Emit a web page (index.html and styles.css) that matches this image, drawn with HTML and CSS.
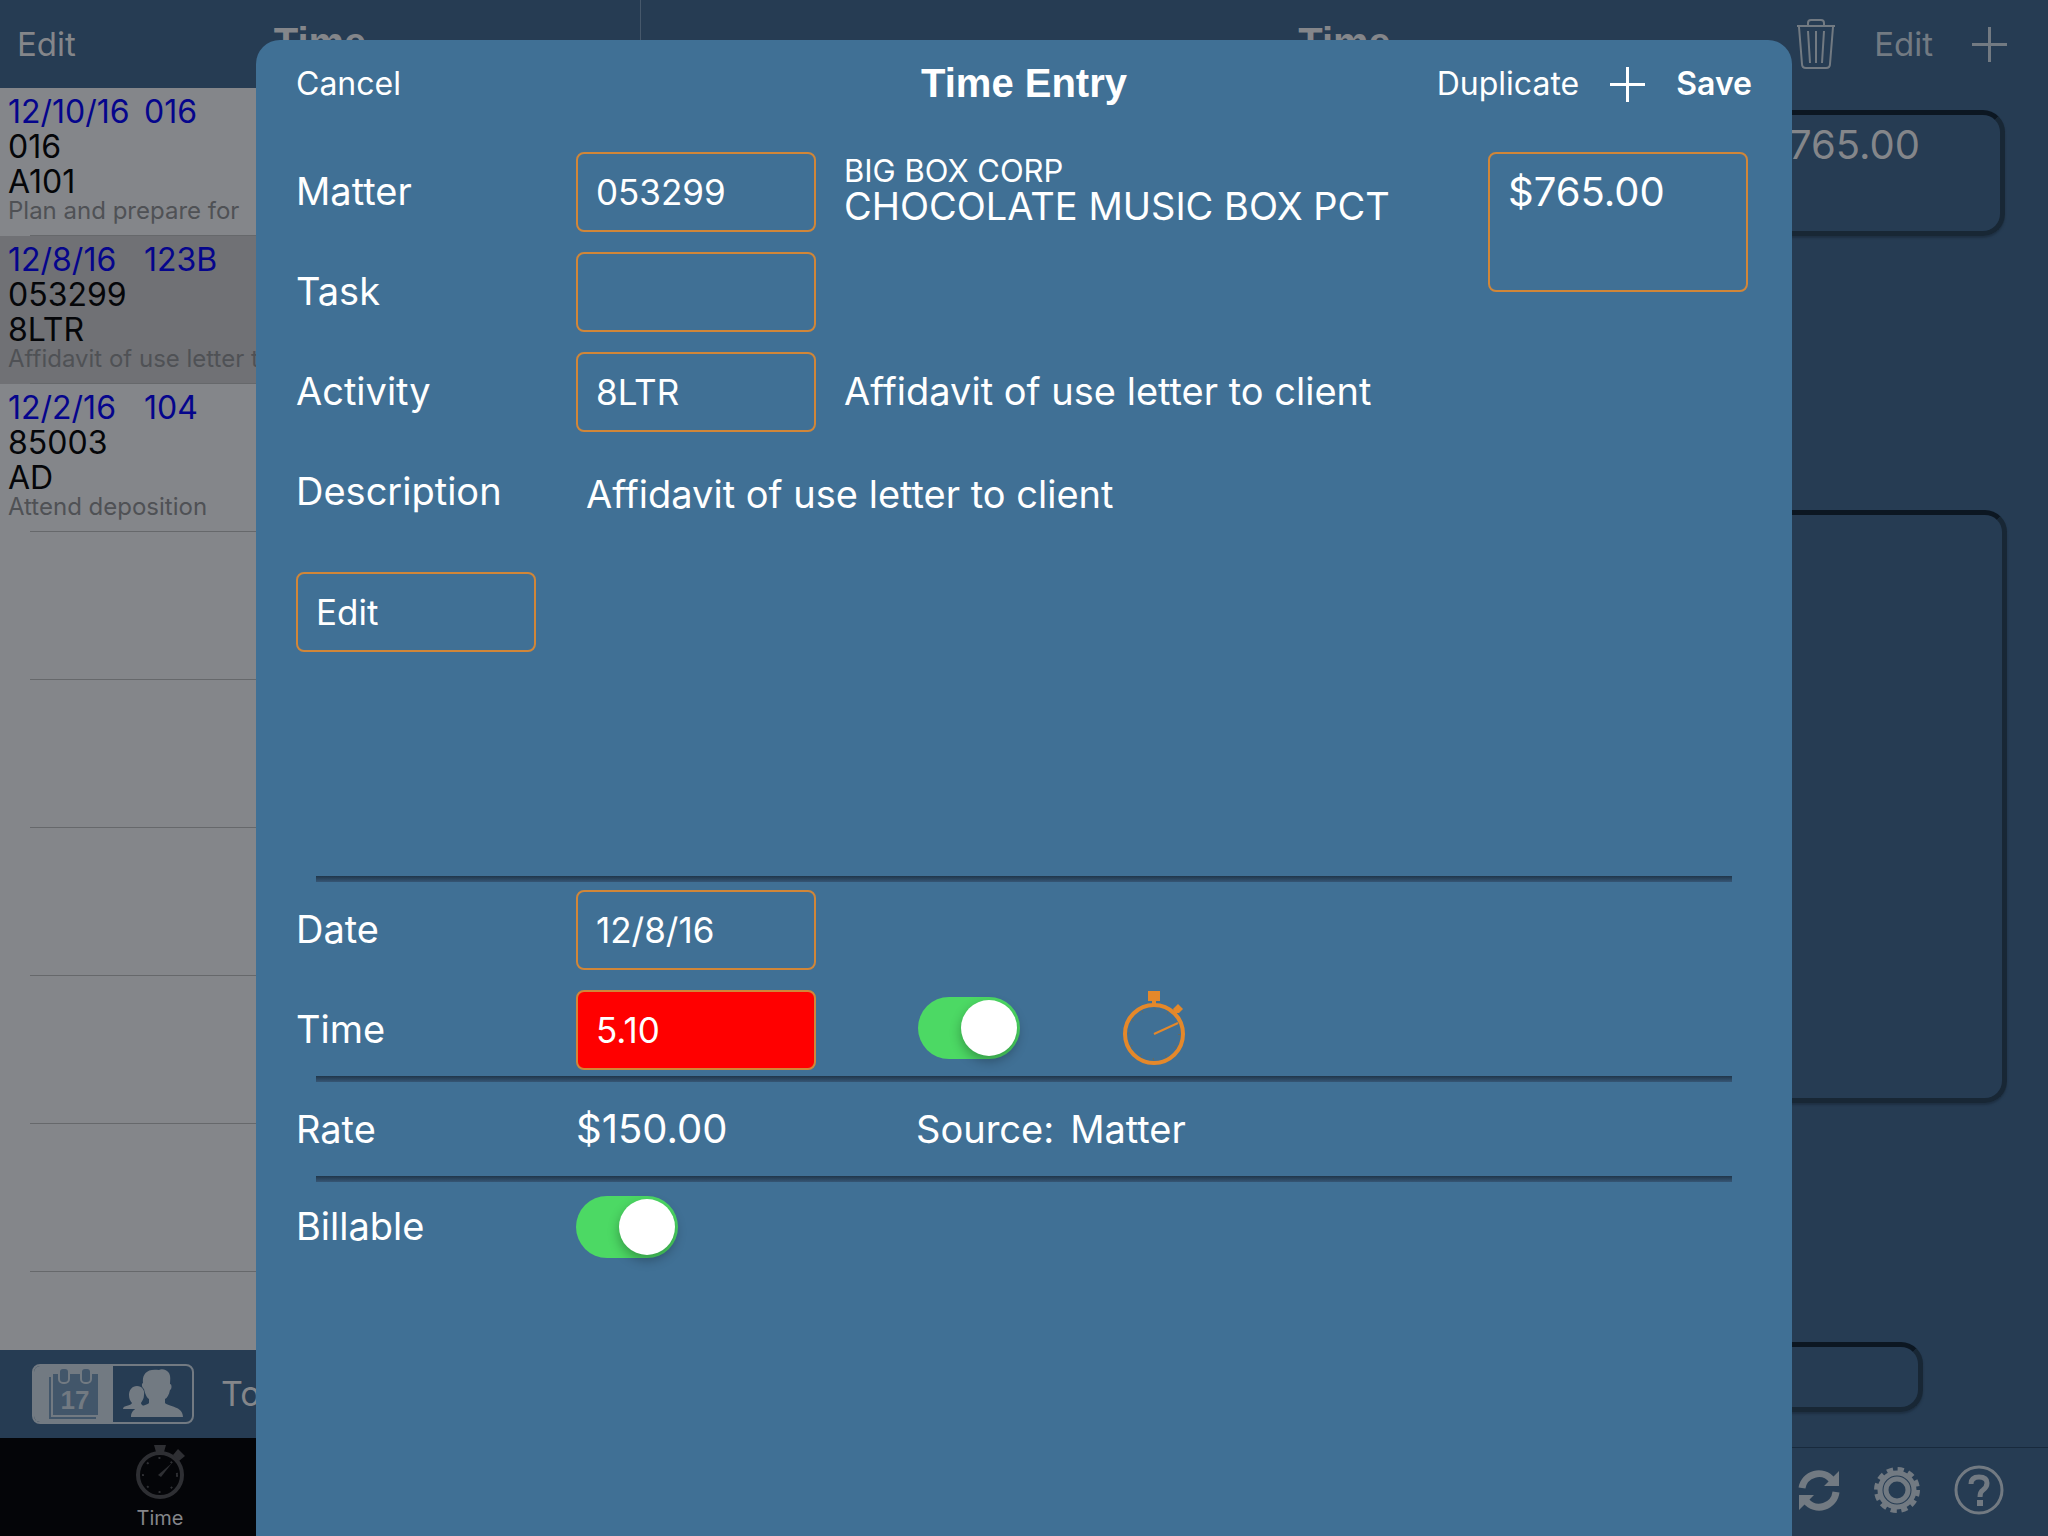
FILE: index.html
```html
<!DOCTYPE html>
<html lang="en">
<head>
    <meta charset="UTF-8">
    <meta name="viewport" content="width=device-width, initial-scale=1.0">
    <title>Time Entry</title>
    <link rel="stylesheet" href="styles.css">
</head>
<body>
    <div class="app">
        <aside class="sidebar">
            <header class="bar">
                <button class="bar-button">Edit</button>
                <h2>Time</h2>
            </header>

            <ul class="entries">
                <li class="entry">
                    <div class="entry-top"><span>12/10/16</span><span>016</span></div>
                    <div class="entry-line">016</div>
                    <div class="entry-line">A101</div>
                    <div class="entry-note">Plan and prepare for</div>
                </li>
                <li class="entry selected">
                    <div class="entry-top"><span>12/8/16</span><span>123B</span></div>
                    <div class="entry-line">053299</div>
                    <div class="entry-line">8LTR</div>
                    <div class="entry-note">Affidavit of use letter to client</div>
                </li>
                <li class="entry">
                    <div class="entry-top"><span>12/2/16</span><span>104</span></div>
                    <div class="entry-line">85003</div>
                    <div class="entry-line">AD</div>
                    <div class="entry-note">Attend deposition</div>
                </li>
                <li class="entry"></li>
                <li class="entry"></li>
                <li class="entry"></li>
                <li class="entry"></li>
                <li class="entry"></li>
            </ul>

            <div class="filter-bar">
                <div class="segmented">
                    <button class="segment active" aria-label="By date">
                        <svg width="50" height="52" viewBox="0 0 50 52">
                            <path d="M1 9V50H47" fill="none" stroke="#42566a" stroke-width="2"/>
                            <path d="M4 6H49V47H4Z" fill="#42566a"/>
                            <rect x="10" y="0" width="10" height="15" rx="4" fill="#42566a" stroke="#727a82" stroke-width="2"/>
                            <rect x="32" y="0" width="10" height="15" rx="4" fill="#42566a" stroke="#727a82" stroke-width="2"/>
                            <text x="26" y="41" text-anchor="middle" class="calendar-day">17</text>
                        </svg>
                    </button>
                    <button class="segment" aria-label="By person">
                        <svg width="60" height="50" viewBox="0 0 60 50" fill="#727a82">
                            <path d="M14 17c5 0 8 4 7 9 0 4-2 6-3 8 0 3 6 3 3 6H0c0-4 8-3 9-6-2-2-3-5-3-8 0-5 3-9 8-9z"/>
                            <path d="M36 1c3-2 8 0 10 3 2 4 1 7 1 11 2 0 2 5 0 6-1 5-3 8-5 9v4c4 4 18 3 18 14H8c0-11 14-10 18-14v-4c-2-1-4-5-5-10-2-1-3-5-1-6-1-8 3-15 16-13z"/>
                        </svg>
                    </button>
                </div>
                <span class="filter-label">To</span>
            </div>

            <nav class="tabs">
                <a class="tab" href="#time">
                    <svg width="50" height="56" viewBox="0 0 50 56">
                        <circle cx="25" cy="31" r="22" fill="none" stroke="#2e2f33" stroke-width="4"/>
                        <path d="M19 1H31L29 8H21Z" fill="#2e2f33"/>
                        <path d="M43 5L50 12L44 17L38 11Z" fill="#2e2f33"/>
                        <path d="M23 31L37 19L26 33Z" fill="#2e2f33"/>
                        <circle cx="25" cy="31" r="17" fill="none" stroke="#2e2f33" stroke-width="2" stroke-dasharray="2 11"/>
                    </svg>
                    Time
                </a>
            </nav>
        </aside>

        <main class="detail">
            <header class="bar">
                <h2>Time</h2>
                <div class="bar-actions">
                    <button class="bar-button" aria-label="Delete">
                        <svg width="38" height="50" viewBox="0 0 38 50" fill="none" stroke="#727a82" stroke-width="2">
                            <path d="M0 7H38M11 7V4Q11 1 14 1H24Q27 1 27 4V7M2 8L5 45Q5 49 9 49H29Q33 49 33 45L36 8"/>
                            <path d="M11 12L13 44M19 12V44M27 12L25 44"/>
                        </svg>
                    </button>
                    <button class="bar-button">Edit</button>
                    <button class="bar-button" aria-label="Add">
                        <svg width="35" height="35" viewBox="0 0 35 35" stroke="#727a82" stroke-width="3"><path d="M0 17.5H35M17.5 0V35"/></svg>
                    </button>
                </div>
            </header>
            <div class="panels">
                <section class="panel panel-total">$765.00</section>
                <section class="panel panel-main"></section>
                <section class="panel panel-small"></section>
            </div>
            <footer class="toolbar">
                <button class="bar-button" aria-label="Sync">
                    <svg width="42" height="44" viewBox="0 0 42 44">
                        <path d="M4 20A17 17 0 0 1 34 12M38 24A17 17 0 0 1 8 33" fill="none" stroke="#727a82" stroke-width="7"/>
                        <path d="M41 3V18H26ZM1 42V27H16Z" fill="#727a82"/>
                    </svg>
                </button>
                <button class="bar-button" aria-label="Settings">
                    <svg width="48" height="48" viewBox="0 0 48 48" fill="none" stroke="#727a82">
                        <circle cx="24" cy="24" r="20" stroke-width="6" stroke-dasharray="6 4.472"/>
                        <circle cx="24" cy="24" r="17" stroke-width="5"/>
                        <circle cx="24" cy="24" r="11" stroke-width="5"/>
                    </svg>
                </button>
                <button class="bar-button" aria-label="Help">
                    <svg width="50" height="50" viewBox="0 0 50 50" fill="none" stroke="#727a82">
                        <circle cx="25" cy="25" r="23" stroke-width="3"/>
                        <path d="M17 19Q17 12 25 12Q33 12 33 18Q33 22 29 25Q26 27 26 32" stroke-width="5"/>
                        <path d="M23 38H29" stroke-width="6"/>
                    </svg>
                </button>
            </footer>
        </main>
    </div>

    <div class="modal" role="dialog" aria-labelledby="modal-title">
        <header class="modal-header">
            <button class="modal-button">Cancel</button>
            <h1 id="modal-title">Time Entry</h1>
            <div class="modal-actions">
                <button class="modal-button">Duplicate</button>
                <button class="modal-button" aria-label="Add">
                    <svg width="35" height="35" viewBox="0 0 35 35" stroke="#fff" stroke-width="3"><path d="M0 17.5H35M17.5 0V35"/></svg>
                </button>
                <button class="modal-button save">Save</button>
            </div>
        </header>

        <form class="form">
            <div class="top">
                <div class="rows">
                    <div class="row">
                        <label for="matter">Matter</label>
                        <input class="field" type="text" id="matter" value="053299">
                        <div class="info stacked"><div class="client">BIG BOX CORP</div><div class="matter-name">CHOCOLATE MUSIC BOX PCT</div></div>
                    </div>
                    <div class="row">
                        <label for="task">Task</label>
                        <input class="field" type="text" id="task">
                    </div>
                    <div class="row">
                        <label for="activity">Activity</label>
                        <input class="field" type="text" id="activity" value="8LTR">
                        <div class="info">Affidavit of use letter to client</div>
                    </div>
                </div>
                <textarea class="amount" aria-label="Amount">$765.00</textarea>
            </div>

            <div class="description">
                <label for="description">Description</label>
                <textarea id="description">Affidavit of use letter to client</textarea>
                <button class="field edit-button" type="button">Edit</button>
            </div>

            <hr>

            <div class="rows schedule">
                <div class="row">
                    <label for="date">Date</label>
                    <input class="field" type="text" id="date" value="12/8/16">
                </div>
                <div class="row wide">
                    <label for="time">Time</label>
                    <input class="field over" type="text" id="time" value="5.10">
                    <div class="timer">
                        <input class="switch" type="checkbox" aria-label="Timer" checked>
                        <button class="modal-button" type="button" aria-label="Stopwatch">
                            <svg width="64" height="76" viewBox="0 0 64 76">
                                <circle cx="32" cy="44" r="29" fill="none" stroke="#e4882a" stroke-width="4"/>
                                <circle cx="32" cy="44" r="25" fill="none" stroke="#6d6a55" stroke-width="2" stroke-dasharray="1 12.09"/>
                                <path d="M32 44L56 33" stroke="#e4882a" stroke-width="2"/>
                                <path d="M26 1H38V11H34V16H30V11H26Z" fill="#e4882a"/>
                                <path d="M56 14L61 19L57 23L53 23L51 19Z" fill="#e4882a"/>
                            </svg>
                        </button>
                    </div>
                </div>
            </div>

            <hr>

            <div class="row wide plain">
                <span>Rate</span>
                <span class="money">$150.00</span>
                <span class="source"><span>Source:</span><span>Matter</span></span>
            </div>

            <hr>

            <div class="row wide plain billable">
                <label for="billable">Billable</label>
                <input class="switch" type="checkbox" id="billable" checked>
            </div>
        </form>
    </div>
</body>
</html>
```
FILE: styles.css
```css
:root {
    --blue: #407095;
    --blue-dim: #263c53;
    --grey: #84868a;
    --orange: #d18638;
    --green: #4cd964;
}

* {
    box-sizing: border-box;
}

body {
    margin: 0;
    height: 100vh;
    overflow: hidden;
    font-family: 'Inter', sans-serif;
    font-size: 38px;
    line-height: 44px;
    background: var(--blue-dim);
    color: #fff;
}

button {
    padding: 0;
    border: 0;
    background: none;
    color: inherit;
    font: inherit;
    cursor: pointer;
}

svg {
    display: block;
}

h1,
h2 {
    margin: 0;
    font-family: 'Liberation Sans', sans-serif;
    font-size: 40px;
    font-weight: bold;
}

h1 {
    padding-bottom: 2px;
}

/* Dimmed app behind the sheet */
.app {
    display: flex;
    height: 100%;
    color: var(--grey);
}

.sidebar {
    display: flex;
    flex-direction: column;
    width: 641px;
    border-right: 1px solid #46586b;
}

.bar {
    display: grid;
    grid-template-columns: 1fr auto 1fr;
    align-items: center;
    height: 88px;
    padding: 0 41px 4px;
}

.sidebar .bar {
    padding: 0 17px 4px;
}

.bar h2 {
    grid-column: 2;
}

.bar-button {
    justify-self: start;
    font-size: 33px;
    padding-top: 4px;
}

.bar-actions {
    display: flex;
    align-items: center;
    justify-content: flex-end;
    gap: 39px;
    color: #727a82;
}

.entries {
    flex: 1;
    min-height: 0;
    overflow: hidden;
    margin: 0;
    padding: 0;
    list-style: none;
    background: var(--grey);
}

.entry {
    height: 148px;
    padding: 6px 8px 0;
    font-size: 32px;
    line-height: 35px;
    color: #050609;
    white-space: nowrap;
    background: linear-gradient(#66686b, #66686b) 30px 100% / 100% 1px no-repeat;
}

.entry.selected {
    background-color: #707175;
}

.entry-top {
    display: grid;
    grid-template-columns: 136px 1fr;
    color: #05058c;
}

.entry-note {
    font-size: 24px;
    line-height: 24px;
    color: #4f5155;
}

.filter-bar {
    display: flex;
    align-items: center;
    gap: 27px;
    height: 88px;
    padding-left: 32px;
    font-size: 34px;
}

.segmented {
    display: flex;
    width: 162px;
    height: 60px;
    border: 2px solid #727a82;
    border-radius: 8px;
    overflow: hidden;
}

.segment {
    flex: 1;
    display: flex;
    align-items: center;
    justify-content: center;
}

.segment.active {
    background: #727a82;
}

.calendar-day {
    font: bold 26px 'Liberation Sans', sans-serif;
    fill: #727a82;
}

.tabs {
    display: flex;
    height: 98px;
    background: #040508;
}

.tab {
    display: flex;
    flex-direction: column;
    align-items: center;
    gap: 6px;
    width: 320px;
    padding-top: 6px;
    font-size: 20px;
    line-height: 24px;
    color: var(--grey);
    text-decoration: none;
}

.detail {
    flex: 1;
    display: flex;
    flex-direction: column;
}

.panels {
    flex: 1;
    display: flex;
    flex-direction: column;
    padding: 22px 41px 35px;
}

.panel {
    border: 5px solid #182735;
    border-top-color: #0c1722;
    border-radius: 22px;
    box-shadow: 0 2px 2px #1e3043;
}

.panel-total {
    height: 126px;
    margin-right: 2px;
    margin-bottom: 274px;
    padding: 8px 80px;
    font-size: 40px;
    text-align: right;
}

.panel-main {
    flex: 1;
    margin-bottom: 239px;
}

.panel-small {
    height: 70px;
    margin-right: 84px;
}

.toolbar {
    display: flex;
    align-items: center;
    justify-content: flex-end;
    gap: 33px;
    height: 89px;
    padding: 0 44px 8px;
    border-top: 1px solid #182a3d;
}

/* Time entry sheet */
.modal {
    position: fixed;
    inset: 40px 12.5% 0;
    padding: 0 40px;
    border-radius: 24px 24px 0 0;
    background: var(--blue);
}

.modal-header {
    display: grid;
    grid-template-columns: 1fr auto 1fr;
    align-items: center;
    height: 88px;
}

.modal-button {
    justify-self: start;
    font-size: 32px;
}

.modal-actions {
    display: flex;
    align-items: center;
    justify-content: flex-end;
    gap: 31px;
}

.save {
    font-weight: 600;
}

.form {
    padding-top: 24px;
}

.top {
    display: flex;
    justify-content: space-between;
    padding-right: 4px;
}

.rows {
    display: flex;
    flex-direction: column;
    gap: 20px;
}

.row {
    display: grid;
    grid-template-columns: 280px 240px auto;
    align-items: center;
    min-height: 80px;
}

.row.wide {
    grid-template-columns: 280px 340px auto;
    justify-content: start;
}

.row.plain {
    min-height: 94px;
}

.row.billable {
    min-height: 90px;
}

label,
.info {
    padding-bottom: 3px;
}

.info {
    padding-left: 28px;
    white-space: nowrap;
}

.info.stacked {
    padding-bottom: 6px;
}

.client {
    font-size: 31px;
    line-height: 34px;
}

.matter-name {
    line-height: 36px;
}

.field {
    width: 240px;
    height: 80px;
    padding: 0 18px;
    border: 2px solid var(--orange);
    border-radius: 8px;
    background: none;
    color: #fff;
    font-family: inherit;
    font-size: 35px;
    text-align: left;
}

.field.over {
    background: #f00;
}

.amount {
    width: 260px;
    height: 140px;
    padding: 16px 18px;
    border: 2px solid var(--orange);
    border-radius: 8px;
    background: none;
    color: #fff;
    font: inherit;
    font-size: 40px;
    resize: none;
}

.money {
    font-size: 40px;
}

.description {
    display: grid;
    grid-template-columns: 280px 1fr;
    grid-template-rows: 80px 80px;
    row-gap: 40px;
    align-items: center;
    align-content: start;
    margin-top: 20px;
    min-height: 424px;
}

.description textarea {
    grid-column: 2;
    grid-row: 1 / 3;
    height: 200px;
    padding: 20px 10px;
    border: 0;
    background: none;
    color: #fff;
    font: inherit;
    resize: none;
}

.edit-button {
    grid-column: 1;
    grid-row: 2;
}

hr {
    height: 6px;
    margin: 0 20px;
    border: 0;
    background: linear-gradient(#20364a, #365675);
}

.schedule {
    padding: 8px 0 6px;
}

.timer {
    display: flex;
    align-items: center;
    gap: 102px;
    padding: 0 0 4px 2px;
}

.switch {
    appearance: none;
    width: 102px;
    height: 62px;
    margin: 0;
    padding: 3px;
    border-radius: 31px;
    background: #9aa7b3;
    cursor: pointer;
}

.switch:checked {
    background: var(--green);
}

.switch::before {
    content: '';
    display: block;
    width: 56px;
    height: 56px;
    border-radius: 50%;
    background: #fff;
    box-shadow: 0 5px 12px rgba(0, 0, 0, 0.3);
}

.switch:checked::before {
    margin-left: auto;
}

.source {
    display: flex;
    gap: 16px;
}
```
